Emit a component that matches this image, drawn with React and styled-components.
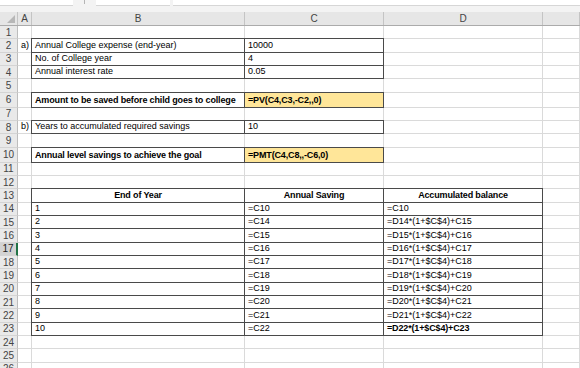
import React from "react";
import styled, { createGlobalStyle, css } from "styled-components";

const GlobalStyle = createGlobalStyle`
  html, body {
    margin: 0;
    padding: 0;
    background: #ffffff;
    overflow: hidden;
  }
  body {
    font-family: "Liberation Sans", Arial, sans-serif;
  }
`;

const COLS = "18px 14px 213px 139px 159px 1fr";
const GRID = "#dadada";
const EDGE = "#4a4a4a";

const Page = styled.div`
  width: 580px;
  height: 368px;
  overflow: hidden;
  background: #ffffff;
`;

const FormulaBar = styled.div`
  display: flex;
  align-items: flex-start;
  height: 12px;
  background: #f3f3f3;
`;

const BarBox = styled.div`
  height: 5px;
  background: #ffffff;
  border-bottom: 1px solid #d6d6d6;
  width: ${(p) => p.$w || "auto"};
  flex: ${(p) => (p.$grow ? 1 : "none")};
  margin-right: ${(p) => p.$gap || "0"};
`;

const BarDots = styled.div`
  width: 23px;
  height: 5px;
  display: flex;
  justify-content: center;

  &::before {
    content: "";
    width: 1px;
    height: 4px;
    background: #b5b5b5;
  }
`;

const Sheet = styled.div`
  display: flex;
  flex-direction: column;
`;

const HeaderRow = styled.div`
  display: grid;
  grid-template-columns: ${COLS};
  height: 14px;
  background: #e6e6e6;
  border-bottom: 1px solid #ababab;
  box-sizing: border-box;
`;

const Corner = styled.div`
  position: relative;
  border-right: 1px solid #c4c4c4;

  &::after {
    content: "";
    position: absolute;
    right: 2px;
    bottom: 2px;
    width: 0;
    height: 0;
    border-left: 8px solid transparent;
    border-bottom: 8px solid #b7b7b7;
  }
`;

const ColLabel = styled.div`
  display: flex;
  align-items: center;
  justify-content: center;
  font-size: 10px;
  color: #444;
  border-right: 1px solid #c4c4c4;
`;

const Row = styled.div`
  display: grid;
  grid-template-columns: ${COLS};
  height: ${(p) => p.$h}px;
`;

const RowLabel = styled.div`
  display: flex;
  align-items: center;
  justify-content: center;
  font-size: 10px;
  color: ${(p) => (p.$active ? "#222" : "#444")};
  background: ${(p) => (p.$active ? "#d3d3d3" : "#e9e9e9")};
  border-right: ${(p) => (p.$active ? "2px solid #217346" : "1px solid #bdbdbd")};
  border-bottom: 1px solid #d4d4d4;
  box-sizing: border-box;
`;

const Cell = styled.div`
  position: relative;
  display: flex;
  align-items: flex-end;
  justify-content: ${(p) => (p.$center ? "center" : "flex-start")};
  padding: 0 3px 1px;
  box-sizing: border-box;
  min-width: 0;
  border-right: 1px solid ${GRID};
  border-bottom: 1px solid ${GRID};
  background: ${(p) => p.$fill || "transparent"};
  font-size: 9px;
  line-height: 11px;
  font-weight: ${(p) => (p.$bold ? 700 : 400)};
  letter-spacing: ${(p) => (p.$bold ? "-0.15px" : "0")};
  color: #000;
  white-space: nowrap;

  ${(p) =>
    p.$boxed &&
    css`
      &::after {
        content: "";
        position: absolute;
        inset: -1px;
        border: 1px solid ${EDGE};
        pointer-events: none;
        z-index: 1;
      }
    `}
`;

const c = (text, opts = {}) => ({ text, ...opts });
const box = (text, opts = {}) => ({ text, boxed: true, ...opts });

const YELLOW = "#ffe699";

const rows = [
  { n: 1 },
  { n: 2, A: c("a)"), B: box("Annual College expense (end-year)"), C: box("10000") },
  { n: 3, B: box("No. of College year"), C: box("4") },
  { n: 4, B: box("Annual interest rate"), C: box("0.05") },
  { n: 5 },
  {
    n: 6,
    h: 15,
    B: box("Amount to be saved before child goes to college", { bold: true }),
    C: box("=PV(C4,C3,-C2,,0)", { bold: true, fill: YELLOW }),
  },
  { n: 7 },
  { n: 8, A: c("b)"), B: box("Years to accumulated required savings"), C: box("10") },
  { n: 9 },
  {
    n: 10,
    h: 15,
    B: box("Annual level savings to achieve the goal", { bold: true }),
    C: box("=PMT(C4,C8,,-C6,0)", { bold: true, fill: YELLOW }),
  },
  { n: 11 },
  { n: 12 },
  {
    n: 13,
    B: box("End of Year", { bold: true, center: true }),
    C: box("Annual Saving", { bold: true, center: true }),
    D: box("Accumulated balance", { bold: true, center: true }),
  },
];

for (let year = 1; year <= 10; year++) {
  const r = 13 + year;
  rows.push({
    n: r,
    B: box(String(year)),
    C: box(year === 1 ? "=C10" : `=C${r - 1}`),
    D: box(year === 1 ? "=C10" : `=D${r - 1}*(1+$C$4)+C${r}`, { bold: year === 10 }),
  });
}
rows.push({ n: 24 }, { n: 25 }, { n: 26 });

const SheetCell = ({ spec }) => {
  if (!spec) return <Cell />;
  return (
    <Cell $boxed={spec.boxed} $bold={spec.bold} $fill={spec.fill} $center={spec.center}>
      {spec.text}
    </Cell>
  );
};

const App = () => {
  return (
    <Page>
      <GlobalStyle />
      <FormulaBar>
        <BarBox $w="73px" />
        <BarDots />
        <BarBox $w="74px" $gap="3px" />
        <BarBox $grow />
      </FormulaBar>
      <Sheet>
        <HeaderRow>
          <Corner />
          {["A", "B", "C", "D", ""].map((l, i) => (
            <ColLabel key={i}>{l}</ColLabel>
          ))}
        </HeaderRow>
        {rows.map((r) => (
          <Row key={r.n} $h={r.h || 13.33}>
            <RowLabel $active={r.n === 17}>{r.n}</RowLabel>
            <SheetCell spec={r.A} />
            <SheetCell spec={r.B} />
            <SheetCell spec={r.C} />
            <SheetCell spec={r.D} />
            <SheetCell />
          </Row>
        ))}
      </Sheet>
    </Page>
  );
};

export default App;
